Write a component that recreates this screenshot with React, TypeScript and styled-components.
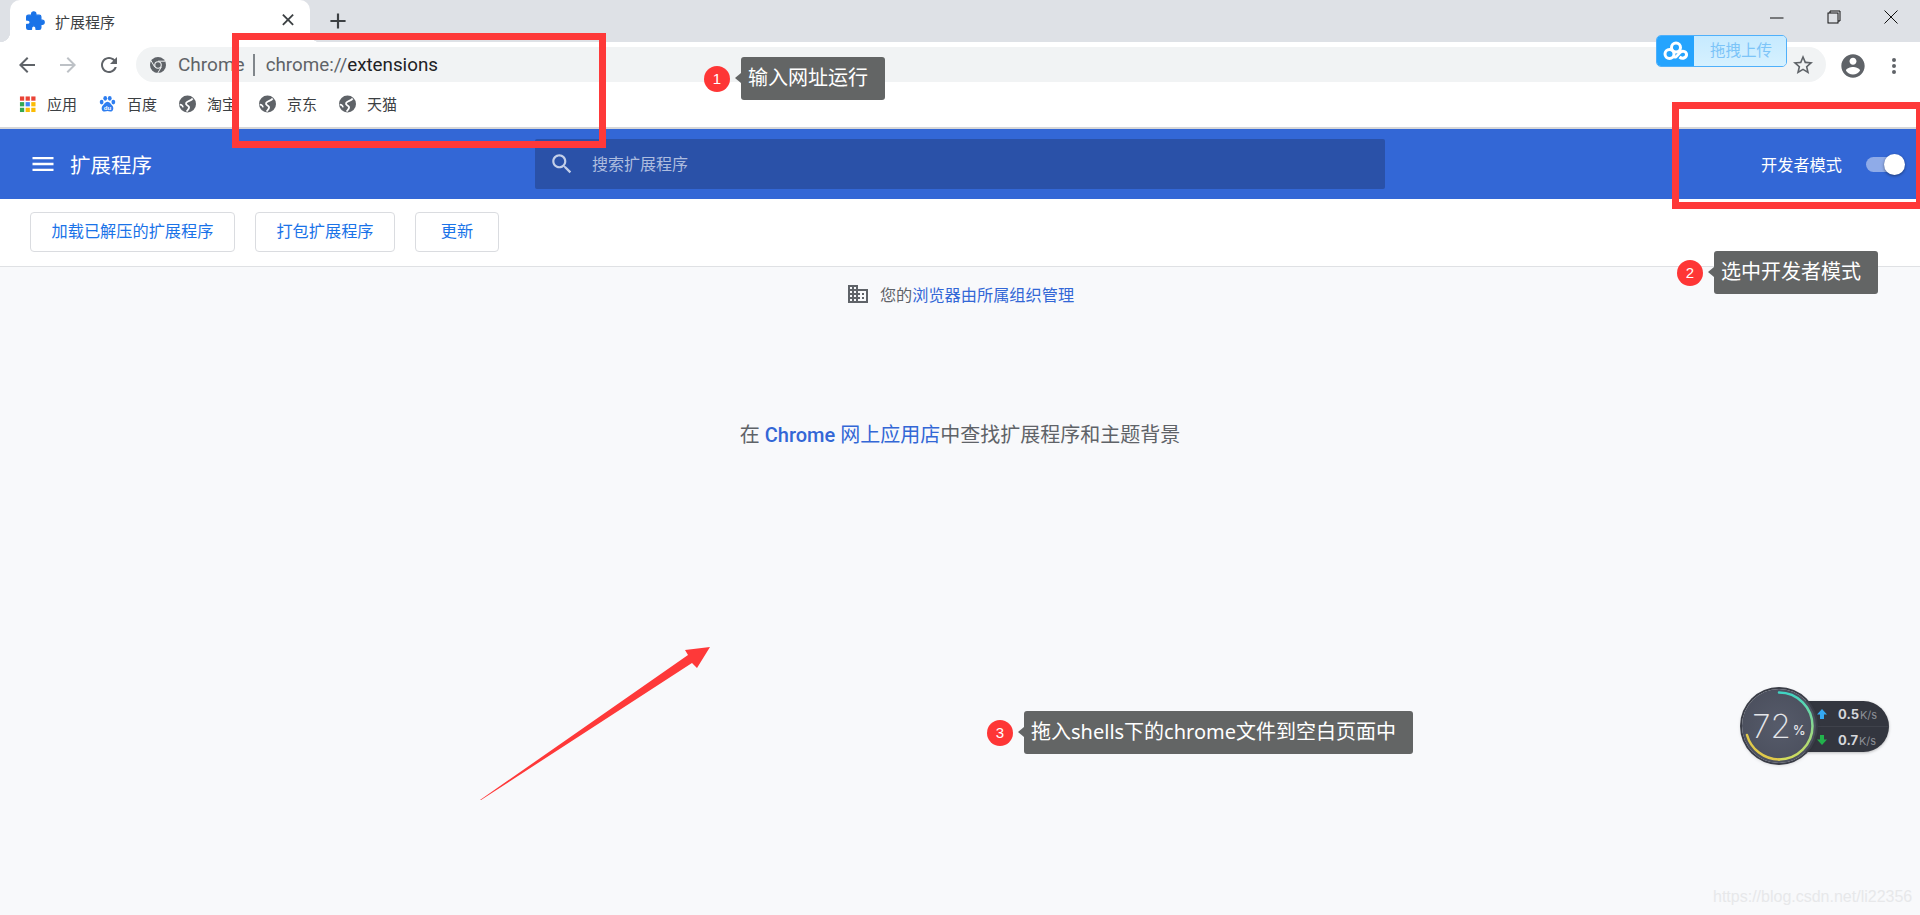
import React from "react";
import styled, { createGlobalStyle } from "styled-components";

const Global = createGlobalStyle`
  html, body { margin: 0; padding: 0; background: #f8f9fb; }
  body { font-family: "Roboto", "Noto Sans CJK SC", sans-serif; }
`;

const Page = styled.div`
  position: relative;
  width: 1920px;
  height: 915px;
  overflow: hidden;
  display: flex;
  flex-direction: column;
  background: #f8f9fb;
  font-family: "Roboto", "Noto Sans CJK SC", sans-serif;
`;

/* browser chrome */
const TabStrip = styled.div`
  height: 42px;
  background: #dee1e6;
  display: flex;
  align-items: flex-end;
  flex-shrink: 0;
`;
const Tab = styled.div`
  position: relative;
  margin-left: 10px;
  width: 300px;
  height: 42px;
  background: #fff;
  border-radius: 10px 10px 0 0;
  display: flex;
  align-items: center;
  padding: 0 11px 0 15px;
  box-sizing: border-box;
  &::before, &::after {
    content: "";
    position: absolute;
    bottom: 0;
    width: 10px;
    height: 10px;
  }
  &::before { left: -10px; background: radial-gradient(circle at 0 0, #dee1e6 10px, #fff 10.5px); }
  &::after { right: -10px; background: radial-gradient(circle at 100% 0, #dee1e6 10px, #fff 10.5px); }
`;
const TabTitle = styled.span`
  margin-left: 10px;
  font-size: 15px;
  color: #3c4043;
  flex: 1;
`;
const NewTab = styled.div`
  margin-left: 15px;
  height: 42px;
  display: flex;
  align-items: center;
`;
const WindowControls = styled.div`
  margin-left: auto;
  height: 42px;
  display: flex;
  align-items: center;
  padding-right: 22px;
  gap: 43px;
  padding-bottom: 9px;
  box-sizing: border-box;
`;
const ToolbarRow = styled.div`
  height: 40px;
  box-sizing: border-box;
  padding: 5px 15px 0;
  background: #fff;
  display: flex;
  align-items: flex-start;
  flex-shrink: 0;
`;
const NavGroup = styled.div`
  display: flex;
  gap: 17px;
  margin-right: 15px;
  height: 35px;
  align-items: center;
`;
const Omnibox = styled.div`
  width: 1690px;
  height: 35px;
  border-radius: 18px;
  background: #f1f3f4;
  display: flex;
  align-items: center;
  padding: 0 11px 0 13px;
  box-sizing: border-box;
  flex-shrink: 0;
`;
const Site = styled.span`
  margin-left: 11px;
  font-size: 19px;
  color: #5f6368;
`;
const UrlDivider = styled.span`
  width: 2px;
  height: 22px;
  background: #80868b;
  margin: 0 11px 0 8px;
`;
const Url = styled.span`
  font-size: 18.8px;
  color: #5f6368;
  & b { font-weight: 400; color: #202124; }
`;
const StarSlot = styled.div`
  margin-left: auto;
  display: flex;
`;
const ProfileGroup = styled.div`
  display: flex;
  align-items: center;
  height: 35px;
  margin-left: 13px;
  gap: 15px;
  padding-top: 1px;
`;
const BookmarkBar = styled.div`
  height: 45px;
  box-sizing: border-box;
  padding: 0 0 2px 19px;
  background: #fff;
  display: flex;
  align-items: center;
  gap: 22px;
  flex-shrink: 0;
`;
const Bookmark = styled.div`
  display: flex;
  align-items: center;
  gap: 11px;
  width: 58px;
  font-size: 15px;
  color: #3c4043;
  white-space: nowrap;
`;
const ChromeRule = styled.div`
  height: 2px;
  background: #d6d7d9;
  flex-shrink: 0;
`;

/* extensions page */
const Header = styled.header`
  height: 70px;
  background: #3367d6;
  display: flex;
  align-items: center;
  flex-shrink: 0;
`;
const HeaderLeft = styled.div`
  width: 535px;
  padding-left: 29px;
  box-sizing: border-box;
  display: flex;
  align-items: center;
  gap: 13px;
`;
const HeaderTitle = styled.h1`
  margin: 0;
  font-size: 20.5px;
  font-weight: 400;
  color: #fff;
`;
const SearchBox = styled.div`
  width: 850px;
  height: 50px;
  background: #2a51a8;
  border-radius: 2px;
  display: flex;
  align-items: center;
  padding-left: 14px;
  box-sizing: border-box;
  gap: 17px;
`;
const Placeholder = styled.span`
  font-size: 16px;
  color: #aebddf;
  margin-bottom: 3px;
`;
const HeaderRight = styled.div`
  flex: 1;
  display: flex;
  justify-content: flex-end;
  align-items: center;
  padding-right: 15px;
  gap: 24px;
`;
const DevLabel = styled.span`
  font-size: 16.2px;
  color: #fff;
`;
const Toggle = styled.div`
  position: relative;
  width: 36px;
  height: 15px;
  border-radius: 8px;
  background: #8fabe8;
  margin-right: 3px;
  &::after {
    content: "";
    position: absolute;
    right: -3px;
    top: -3px;
    width: 21px;
    height: 21px;
    border-radius: 50%;
    background: #fff;
    box-shadow: 0 1px 3px rgba(0, 0, 0, 0.45);
  }
`;
const ActionBar = styled.div`
  height: 68px;
  box-sizing: border-box;
  background: #fff;
  border-bottom: 1px solid #dfe1e4;
  padding-left: 30px;
  display: flex;
  align-items: center;
  gap: 20px;
  flex-shrink: 0;
`;
const ActionButton = styled.button<{ $w: number }>`
  width: ${(p) => p.$w}px;
  height: 40px;
  padding: 0 0 4px;
  margin-bottom: 1px;
  background: #fff;
  border: 1px solid #dadce0;
  border-radius: 4px;
  color: #1a73e8;
  font-size: 16.2px;
  font-family: inherit;
`;
const Main = styled.main`
  flex: 1;
  display: flex;
  flex-direction: column;
  align-items: center;
  padding-top: 15px;
`;
const Managed = styled.div`
  display: flex;
  align-items: center;
  gap: 10px;
  height: 24px;
  font-size: 16.2px;
  color: #5f6368;
  & a { color: #3367d6; text-decoration: none; }
`;
const StoreLine = styled.div`
  margin-top: 115px;
  font-size: 20px;
  color: #5f6368;
  line-height: 28px;
  white-space: pre;
  & a { color: #3367d6; text-decoration: none; }
  & b { font-weight: 500; }
`;

/* annotations over the screenshot */
const RedFrame = styled.div<{ $x: number; $y: number; $w: number; $h: number }>`
  position: absolute;
  left: ${(p) => p.$x}px;
  top: ${(p) => p.$y}px;
  width: ${(p) => p.$w}px;
  height: ${(p) => p.$h}px;
  box-sizing: border-box;
  border: 7px solid #fe3939;
`;
const Note = styled.div<{ $x: number; $y: number }>`
  position: absolute;
  left: ${(p) => p.$x}px;
  top: ${(p) => p.$y}px;
  display: flex;
  align-items: center;
  gap: 11px;
`;
const NoteBadge = styled.span`
  width: 26px;
  height: 26px;
  border-radius: 50%;
  background: #fe3636;
  color: #fff;
  font: 15px/26px "Liberation Sans", sans-serif;
  text-align: center;
`;
const NoteBubble = styled.span`
  position: relative;
  height: 43px;
  line-height: 42px;
  padding: 0 17px 0 7px;
  background: #636565;
  border-radius: 3px;
  color: #fff;
  font-size: 20px;
  font-family: "Noto Sans", "Noto Sans CJK SC", sans-serif;
  white-space: nowrap;
  &::before {
    content: "";
    position: absolute;
    left: -6px;
    top: 16px;
    border-style: solid;
    border-width: 5px 6px 5px 0;
    border-color: transparent #636565 transparent transparent;
  }
`;
const UploadWidget = styled.div`
  position: absolute;
  left: 1656px;
  top: 35px;
  width: 131px;
  height: 32px;
  box-sizing: border-box;
  border: 1px solid #4fb0fb;
  border-radius: 5px;
  overflow: hidden;
  display: flex;
`;
const UploadLogo = styled.div`
  width: 37px;
  background: #25a4fe;
  display: flex;
  align-items: center;
  justify-content: center;
`;
const UploadText = styled.div`
  flex: 1;
  background: linear-gradient(#c6eaff, #d6f1ff);
  color: #7cc4f8;
  font-size: 15.5px;
  line-height: 30px;
  text-align: center;
  padding-left: 2px;
`;
const ArrowLayer = styled.svg`
  position: absolute;
  left: 470px;
  top: 640px;
`;
const Monitor = styled.div`
  position: absolute;
  left: 1742px;
  top: 689px;
  width: 147px;
  height: 74px;
  display: flex;
  align-items: center;
`;
const MonitorPill = styled.div`
  position: absolute;
  right: 0;
  top: 12px;
  width: 100px;
  height: 51px;
  box-sizing: border-box;
  padding-left: 27px;
  background: #33363f;
  border-radius: 0 26px 26px 0;
  box-shadow: 0 1px 3px rgba(0, 0, 0, 0.25);
  display: flex;
  flex-direction: column;
`;
const SpeedRow = styled.div`
  flex: 1;
  display: flex;
  align-items: center;
  gap: 10px;
  color: #d5d7db;
  font: 700 13px "Inter", sans-serif;
  & + & { border-top: 1px solid #3f424b; }
  & small { font-weight: 400; font-size: 11px; color: #8d9097; margin-left: 1px; }
`;
const MonitorDial = styled.div`
  position: relative;
  width: 74px;
  height: 74px;
  border-radius: 50%;
  background: radial-gradient(circle at 50% 50%, #565b6a, #484c5a);
  box-shadow: 0 0 0 2px #3a3d47, 0 1px 4px rgba(0, 0, 0, 0.3);
  display: flex;
  align-items: center;
  justify-content: center;
  color: #e4e6ea;
  font: 200 33px "Inter", sans-serif;
  & small { font-size: 13px; font-weight: 500; align-self: flex-end; margin: 0 0 25px 2px; }
`;
const DialRing = styled.svg`
  position: absolute;
  inset: 0;
`;
const Watermark = styled.div`
  position: absolute;
  left: 1713px;
  top: 888px;
  font: 16px "Liberation Sans", sans-serif;
  color: #e7e8ea;
  white-space: nowrap;
`;

const Ic = ({ d, size = 24, color = "#5f6368" }: { d: string; size?: number; color?: string }) => (
  <svg width={size} height={size} viewBox="0 0 24 24" fill={color}>
    <path d={d} />
  </svg>
);

const P = {
  ext: "M20.5 11H19V7c0-1.1-.9-2-2-2h-4V3.5C13 2.12 11.88 1 10.5 1S8 2.12 8 3.5V5H4c-1.1 0-1.99.9-1.99 2v3.8H3.5c1.49 0 2.7 1.21 2.7 2.7s-1.21 2.7-2.7 2.7H2V20c0 1.1.9 2 2 2h3.8v-1.5c0-1.49 1.21-2.7 2.7-2.7 1.49 0 2.7 1.21 2.7 2.7V22H17c1.1 0 2-.9 2-2v-4h1.5c1.38 0 2.5-1.12 2.5-2.5S21.88 11 20.5 11z",
  back: "M20 11H7.83l5.59-5.59L12 4l-8 8 8 8 1.41-1.41L7.83 13H20v-2z",
  forward: "M12 4l-1.41 1.41L16.17 11H4v2h12.17l-5.58 5.59L12 20l8-8z",
  reload: "M17.65 6.35C16.2 4.9 14.21 4 12 4c-4.42 0-7.99 3.58-7.99 8s3.57 8 7.99 8c3.73 0 6.84-2.55 7.73-6h-2.08c-.82 2.33-3.04 4-5.65 4-3.31 0-6-2.69-6-6s2.69-6 6-6c1.66 0 3.14.69 4.22 1.78L13 11h7V4l-2.35 2.35z",
  star: "M22 9.24l-7.19-.62L12 2 9.19 8.63 2 9.24l5.46 4.73L5.82 21 12 17.27 18.18 21l-1.63-7.03L22 9.24zM12 15.4l-3.76 2.27 1-4.28-3.32-2.88 4.38-.38L12 6.1l1.71 4.04 4.38.38-3.32 2.88 1 4.28L12 15.4z",
  account: "M12 2C6.48 2 2 6.48 2 12s4.48 10 10 10 10-4.48 10-10S17.52 2 12 2zm0 3c1.66 0 3 1.34 3 3s-1.34 3-3 3-3-1.34-3-3 1.34-3 3-3zm0 14.2c-2.5 0-4.71-1.28-6-3.22.03-1.99 4-3.08 6-3.08 1.99 0 5.97 1.09 6 3.08-1.29 1.94-3.5 3.22-6 3.22z",
  more: "M12 8a2 2 0 1 0 0-4 2 2 0 0 0 0 4zm0 2a2 2 0 1 0 0 4 2 2 0 0 0 0-4zm0 6a2 2 0 1 0 0 4 2 2 0 0 0 0-4z",
  menu: "M3 18h18v-2H3v2zm0-5h18v-2H3v2zm0-7v2h18V6H3z",
  search: "M15.5 14h-.79l-.28-.27C15.41 12.59 16 11.11 16 9.5 16 5.91 13.09 3 9.5 3S3 5.91 3 9.5 5.91 16 9.5 16c1.61 0 3.09-.59 4.23-1.57l.27.28v.79l5 4.99L20.49 19l-4.99-5zm-6 0C7.01 14 5 11.99 5 9.5S7.01 5 9.5 5 14 7.01 14 9.5 11.99 14 9.5 14z",
  domain: "M12 7V3H2v18h20V7H12zM6 19H4v-2h2v2zm0-4H4v-2h2v2zm0-4H4V9h2v2zm0-4H4V5h2v2zm4 12H8v-2h2v2zm0-4H8v-2h2v2zm0-4H8V9h2v2zm0-4H8V5h2v2zm10 12h-8v-2h2v-2h-2v-2h2v-2h-2V9h8v10zm-2-8h-2v2h2v-2zm0 4h-2v2h2v-2z",
  plus: "M19 13h-6v6h-2v-6H5v-2h6V5h2v6h6v2z",
  close: "M18.3 5.71L16.89 4.3 12 9.17 7.11 4.3 5.7 5.71 10.59 10.6 5.7 15.49l1.41 1.41L12 12.03l4.89 4.87 1.41-1.41-4.89-4.89z",
};

const TabPuzzle = () => (
  <svg width="20" height="20" viewBox="0 0 24 24" fill="#1a73e8" stroke="#1a73e8" strokeWidth="1.6" strokeLinejoin="round">
    <path d={P.ext} />
  </svg>
);

const AppsIcon = () => {
  const c = ["#ea4335", "#ea4335", "#ea4335", "#34a853", "#4285f4", "#fbbc05", "#34a853", "#fbbc05", "#fbbc05"];
  return (
    <svg width="18" height="18" viewBox="0 0 18 18">
      {c.map((f, i) => (
        <rect key={i} x={1 + (i % 3) * 6} y={1 + Math.floor(i / 3) * 6} width="4.5" height="4.5" fill={f} />
      ))}
    </svg>
  );
};

const BaiduIcon = () => (
  <svg width="18" height="18" viewBox="0 0 18 18" fill="#2e7ef0">
    <ellipse cx="2.8" cy="7" rx="2" ry="2.4" />
    <ellipse cx="6.6" cy="3" rx="2" ry="2.6" />
    <ellipse cx="11.4" cy="3" rx="2" ry="2.6" />
    <ellipse cx="15.2" cy="7" rx="2" ry="2.4" />
    <path d="M9 6.5c2.5 0 3.2 2.5 5 4 2 1.8 1.5 6.5-2 6.500-1.200 0-2-.5-3-.5s-1.800.5-3 .5c-3.500 0-4-4.700-2-6.500 1.800-1.500 2.500-4 5-4z" />
    <text x="9" y="15" fontSize="6.500" fontWeight="700" fill="#fff" textAnchor="middle" fontFamily="Liberation Sans">du</text>
  </svg>
);

const GlobeIcon = () => (
  <svg width="18" height="18" viewBox="0 0 18 18">
    <circle cx="9" cy="9" r="9" fill="#5f6368" />
    <path d="M14.500 3.200C13 6 9 5.500 7.500 8 6.500 10 9.500 10.500 10.500 12S9.500 15 8 17" fill="none" stroke="#fff" strokeWidth="1.900" />
    <path d="M.8 9.500c2 .2 3.200 1.300 3.500 3" fill="none" stroke="#fff" strokeWidth="1.500" />
  </svg>
);

const ChromeMark = () => (
  <svg width="18" height="18" viewBox="0 0 18 18">
    <circle cx="9" cy="9" r="8" fill="#5f6368" />
    <circle cx="9" cy="9" r="3.800" fill="#f1f3f4" />
    <circle cx="9" cy="9" r="2.700" fill="#5f6368" />
    <path d="M9 5.200h7M5.700 11l-3.500-6M12.300 11l-3.500 6" stroke="#f1f3f4" strokeWidth="1" />
  </svg>
);

const WinMin = () => (
  <svg width="14" height="14" viewBox="0 0 14 14"><path d="M0 8h13.500" stroke="#111" strokeWidth="1" /></svg>
);
const WinRestore = () => (
  <svg width="14" height="14" viewBox="0 0 14 14" fill="none" stroke="#111">
    <rect x="1" y="3" width="10" height="10" />
    <path d="M3 3V1h10v10h-2" />
  </svg>
);
const WinClose = () => (
  <svg width="14" height="14" viewBox="0 0 14 14" stroke="#111"><path d="M.5.500l13 13M13.500.500l-13 13" /></svg>
);

const CloudMark = () => (
  <svg width="26" height="20" viewBox="0 0 26 20" fill="none" stroke="#fff" strokeWidth="3">
    <circle cx="13" cy="6.500" r="4.500" />
    <circle cx="6.500" cy="13" r="4.500" />
    <path d="M10 15c3 3 4.500-1 7-3.500 2-2 6-1.500 6.500 1.500.5 3.500-4 5.500-7 3" />
  </svg>
);

const UpArrow = () => (
  <svg width="12" height="12" viewBox="0 0 12 12" fill="#35a9f2"><path d="M6 1l5 5.500H8V11H4V6.500H1z" /></svg>
);
const DownArrow = () => (
  <svg width="12" height="12" viewBox="0 0 12 12" fill="#22b24c"><path d="M6 11L1 5.500h3V1h4v4.500h3z" /></svg>
);

const bookmarks = ["淘宝", "京东", "天猫"];

export default function App() {
  return (
    <Page>
      <Global />
      <TabStrip>
        <Tab>
          <TabPuzzle />
          <TabTitle>扩展程序</TabTitle>
          <Ic d={P.close} size={22} color="#3c4043" />
        </Tab>
        <NewTab>
          <Ic d={P.plus} size={26} color="#3c4043" />
        </NewTab>
        <WindowControls>
          <WinMin />
          <WinRestore />
          <WinClose />
        </WindowControls>
      </TabStrip>
      <ToolbarRow>
        <NavGroup>
          <Ic d={P.back} />
          <Ic d={P.forward} color="#bdc1c6" />
          <Ic d={P.reload} />
        </NavGroup>
        <Omnibox>
          <ChromeMark />
          <Site>Chrome</Site>
          <UrlDivider />
          <Url>
            chrome://<b>extensions</b>
          </Url>
          <StarSlot>
            <Ic d={P.star} />
          </StarSlot>
        </Omnibox>
        <ProfileGroup>
          <Ic d={P.account} size={28} />
          <Ic d={P.more} />
        </ProfileGroup>
      </ToolbarRow>
      <BookmarkBar>
        <Bookmark>
          <AppsIcon />
          应用
        </Bookmark>
        <Bookmark>
          <BaiduIcon />
          百度
        </Bookmark>
        {bookmarks.map((b) => (
          <Bookmark key={b}>
            <GlobeIcon />
            {b}
          </Bookmark>
        ))}
      </BookmarkBar>
      <ChromeRule />
      <Header>
        <HeaderLeft>
          <Ic d={P.menu} size={28} color="#fff" />
          <HeaderTitle>扩展程序</HeaderTitle>
        </HeaderLeft>
        <SearchBox>
          <Ic d={P.search} size={26} color="#c3cfe9" />
          <Placeholder>搜索扩展程序</Placeholder>
        </SearchBox>
        <HeaderRight>
          <DevLabel>开发者模式</DevLabel>
          <Toggle />
        </HeaderRight>
      </Header>
      <ActionBar>
        <ActionButton $w={205}>加载已解压的扩展程序</ActionButton>
        <ActionButton $w={140}>打包扩展程序</ActionButton>
        <ActionButton $w={84}>更新</ActionButton>
      </ActionBar>
      <Main>
        <Managed>
          <Ic d={P.domain} />
          <span>
            您的<a>浏览器由所属组织管理</a>
          </span>
        </Managed>
        <StoreLine>
          在 <a><b>Chrome</b> 网上应用店</a>中查找扩展程序和主题背景
        </StoreLine>
      </Main>

      <RedFrame $x={232} $y={33} $w={374} $h={115} />
      <RedFrame $x={1672} $y={102} $w={251} $h={107} />
      <UploadWidget>
        <UploadLogo>
          <CloudMark />
        </UploadLogo>
        <UploadText>拖拽上传</UploadText>
      </UploadWidget>
      <Note $x={704} $y={57}>
        <NoteBadge>1</NoteBadge>
        <NoteBubble>输入网址运行</NoteBubble>
      </Note>
      <Note $x={1677} $y={251}>
        <NoteBadge>2</NoteBadge>
        <NoteBubble>选中开发者模式</NoteBubble>
      </Note>
      <Note $x={987} $y={711}>
        <NoteBadge>3</NoteBadge>
        <NoteBubble>拖入shells下的chrome文件到空白页面中</NoteBubble>
      </Note>
      <ArrowLayer width="250" height="170" viewBox="470 640 250 170">
        <path d="M480 800L688 655L685 650L710 647L697 668L692 663L481 800Z" fill="#fe3939" />
      </ArrowLayer>
      <Monitor>
        <MonitorPill>
          <SpeedRow>
            <UpArrow />
            <span>
              0.5<small>K/s</small>
            </span>
          </SpeedRow>
          <SpeedRow>
            <DownArrow />
            <span>
              0.7<small>K/s</small>
            </span>
          </SpeedRow>
        </MonitorPill>
        <MonitorDial>
          <DialRing width="74" height="74" viewBox="0 0 74 74" fill="none" strokeWidth="2.500" strokeLinecap="round">
            <defs>
              <linearGradient id="ringA" x1="0" y1="0" x2="0" y2="1">
                <stop offset="0" stopColor="#3fd4c4" />
                <stop offset="1" stopColor="#d4dc5a" />
              </linearGradient>
            </defs>
            <path d="M37 3.500A33.500 33.500 0 0 1 70.500 37A33.500 33.500 0 0 1 37 70.500" stroke="url(#ringA)" />
            <path d="M37 70.500A33.500 33.500 0 0 1 5 46" stroke="#e0c94a" />
          </DialRing>
          72<small>%</small>
        </MonitorDial>
      </Monitor>
      <Watermark>https://blog.csdn.net/li22356</Watermark>
    </Page>
  );
}
